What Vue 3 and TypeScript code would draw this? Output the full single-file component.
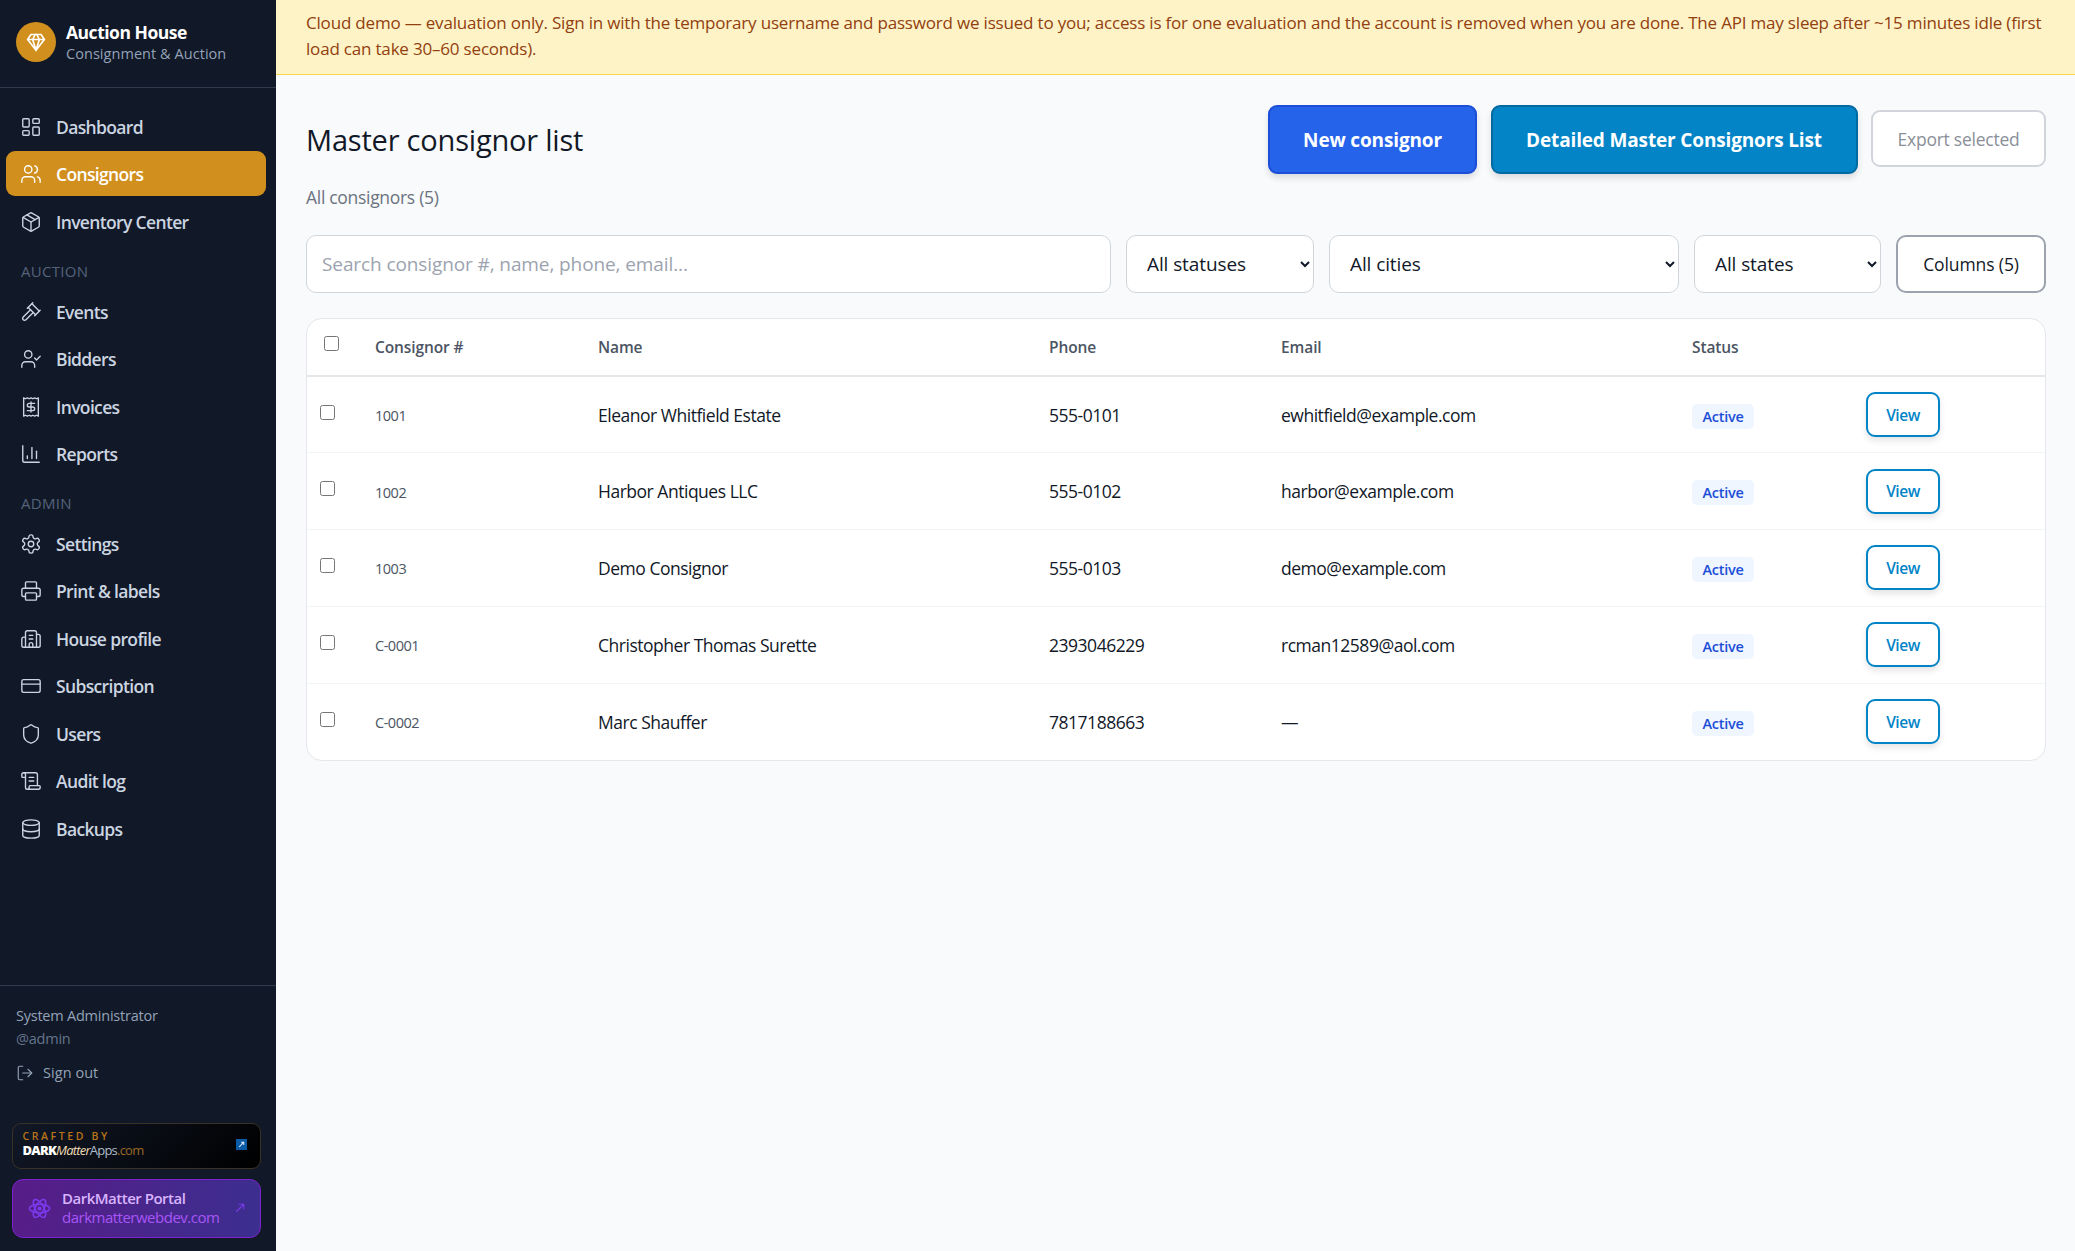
<template>
  <div class="app">
    <aside class="sidebar">
      <div class="brand">
        <div class="brand__logo">
          <svg viewBox="0 0 24 24" class="brand__gem" fill="none" stroke="currentColor" stroke-width="2" stroke-linecap="round" stroke-linejoin="round">
            <path d="M6 3h12l4 6-10 13L2 9Z" />
            <path d="M11 3 8 9l4 13 4-13-3-6" />
            <path d="M2 9h20" />
          </svg>
        </div>
        <div>
          <div class="brand__title">Auction House</div>
          <div class="brand__sub">Consignment &amp; Auction</div>
        </div>
      </div>

      <nav class="nav">
        <template v-for="group in navGroups" :key="group.label">
          <div v-if="group.label" class="nav__label">{{ group.label }}</div>
          <a
            v-for="item in group.items"
            :key="item.name"
            class="nav__item"
            :class="{ 'nav__item--active': item.name === 'Consignors' }"
          >
            <svg viewBox="0 0 24 24" class="nav__icon" fill="none" stroke="currentColor" stroke-width="1.5" stroke-linecap="round" stroke-linejoin="round">
              <path v-for="d in icons[item.icon]" :key="d" :d="d" />
            </svg>
            {{ item.name }}
          </a>
        </template>
      </nav>

      <div class="account">
        <div class="account__name">System Administrator</div>
        <div class="account__handle">@admin</div>
        <a class="account__signout">
          <svg viewBox="0 0 24 24" fill="none" stroke="currentColor" stroke-width="1.5" stroke-linecap="round" stroke-linejoin="round">
            <path d="M9 21H5a2 2 0 0 1-2-2V5a2 2 0 0 1 2-2h4" />
            <path d="m16 17 5-5-5-5" />
            <path d="M21 12H9" />
          </svg>
          Sign out
        </a>
      </div>

      <div class="crafted">
        <div>
          <div class="crafted__by">CRAFTED BY</div>
          <div class="crafted__logo"><b>DARK</b><i>Matter</i><span>Apps</span><em>.com</em></div>
        </div>
        <span class="crafted__link">
          <svg viewBox="0 0 12 12" fill="none" stroke="#dbeafe" stroke-width="1.1"><path d="M3.5 8.5l5-5M5.5 3.5h3v3" /></svg>
        </span>
      </div>

      <div class="portal">
        <svg viewBox="0 0 24 24" class="portal__atom" fill="none" stroke="currentColor" stroke-width="1.6">
          <ellipse cx="12" cy="12" rx="10.5" ry="4.4" />
          <ellipse cx="12" cy="12" rx="10.5" ry="4.4" transform="rotate(60 12 12)" />
          <ellipse cx="12" cy="12" rx="10.5" ry="4.4" transform="rotate(120 12 12)" />
          <circle cx="12" cy="12" r="2.2" fill="currentColor" stroke="none" />
        </svg>
        <div class="portal__text">
          <div class="portal__name">DarkMatter Portal</div>
          <div class="portal__url">darkmatterwebdev.com</div>
        </div>
        <svg viewBox="0 0 12 12" class="portal__arrow" fill="none" stroke="currentColor" stroke-width="1.3"><path d="M1.5 10.5l9-9M4.5 1.5h6v6" /></svg>
      </div>
    </aside>

    <div class="content">
      <div class="banner">
        Cloud demo — evaluation only. Sign in with the temporary username and password we issued to you; access is for one evaluation and the account is removed when you are done. The API may sleep after ~15 minutes idle (first load can take 30–60 seconds).
      </div>

      <main class="page">
        <div class="page__head">
          <h1 class="page__title">Master consignor list</h1>
          <div class="page__actions">
            <button class="btn btn--blue">New consignor</button>
            <button class="btn btn--sky">Detailed Master Consignors List</button>
            <button class="btn btn--export">Export selected</button>
          </div>
        </div>

        <div class="page__count">All consignors (5)</div>

        <div class="filters">
          <input class="filters__search" type="text" placeholder="Search consignor #, name, phone, email..." />
          <select class="filters__select filters__select--status"><option>All statuses</option></select>
          <select class="filters__select filters__select--city"><option>All cities</option></select>
          <select class="filters__select filters__select--state"><option>All states</option></select>
          <button class="filters__columns">Columns (5)</button>
        </div>

        <div class="card">
          <table class="table">
            <colgroup>
              <col style="width: 52px" />
              <col style="width: 223px" />
              <col style="width: 451px" />
              <col style="width: 232px" />
              <col style="width: 411px" />
              <col style="width: 174px" />
              <col />
            </colgroup>
            <thead>
              <tr>
                <th class="table__check"><input type="checkbox" /></th>
                <th>Consignor #</th>
                <th>Name</th>
                <th>Phone</th>
                <th>Email</th>
                <th>Status</th>
                <th></th>
              </tr>
            </thead>
            <tbody>
              <tr v-for="row in consignors" :key="row.id">
                <td class="table__check"><input type="checkbox" /></td>
                <td class="table__id">{{ row.id }}</td>
                <td>{{ row.name }}</td>
                <td>{{ row.phone }}</td>
                <td>{{ row.email }}</td>
                <td class="table__status"><span class="badge">Active</span></td>
                <td><button class="view">View</button></td>
              </tr>
            </tbody>
          </table>
        </div>
      </main>
    </div>
  </div>
</template>

<script setup lang="ts">
interface NavItem {
  name: string
  icon: string
}

interface NavGroup {
  label: string
  items: NavItem[]
}

const navGroups: NavGroup[] = [
  {
    label: '',
    items: [
      { name: 'Dashboard', icon: 'dashboard' },
      { name: 'Consignors', icon: 'users' },
      { name: 'Inventory Center', icon: 'package' },
    ],
  },
  {
    label: 'AUCTION',
    items: [
      { name: 'Events', icon: 'gavel' },
      { name: 'Bidders', icon: 'userCheck' },
      { name: 'Invoices', icon: 'receipt' },
      { name: 'Reports', icon: 'chart' },
    ],
  },
  {
    label: 'ADMIN',
    items: [
      { name: 'Settings', icon: 'settings' },
      { name: 'Print & labels', icon: 'printer' },
      { name: 'House profile', icon: 'building' },
      { name: 'Subscription', icon: 'card' },
      { name: 'Users', icon: 'shield' },
      { name: 'Audit log', icon: 'scroll' },
      { name: 'Backups', icon: 'database' },
    ],
  },
]

const icons: Record<string, string[]> = {
  dashboard: [
    'M4 3h5a1 1 0 0 1 1 1v7a1 1 0 0 1-1 1H4a1 1 0 0 1-1-1V4a1 1 0 0 1 1-1z',
    'M15 3h5a1 1 0 0 1 1 1v3a1 1 0 0 1-1 1h-5a1 1 0 0 1-1-1V4a1 1 0 0 1 1-1z',
    'M15 12h5a1 1 0 0 1 1 1v7a1 1 0 0 1-1 1h-5a1 1 0 0 1-1-1v-7a1 1 0 0 1 1-1z',
    'M4 16h5a1 1 0 0 1 1 1v3a1 1 0 0 1-1 1H4a1 1 0 0 1-1-1v-3a1 1 0 0 1 1-1z',
  ],
  users: [
    'M16 21v-2a4 4 0 0 0-4-4H6a4 4 0 0 0-4 4v2',
    'M13 7a4 4 0 1 1-8 0 4 4 0 0 1 8 0z',
    'M22 21v-2a4 4 0 0 0-3-3.87',
    'M16 3.13a4 4 0 0 1 0 7.75',
  ],
  package: [
    'M11 21.73a2 2 0 0 0 2 0l7-4A2 2 0 0 0 21 16V8a2 2 0 0 0-1-1.73l-7-4a2 2 0 0 0-2 0l-7 4A2 2 0 0 0 3 8v8a2 2 0 0 0 1 1.73z',
    'M12 22V12',
    'M3.29 7 12 12l8.71-5',
    'M7.5 4.27l9 5.15',
  ],
  gavel: [
    'm14.5 12.5-8 8a2.119 2.119 0 1 1-3-3l8-8',
    'm16 16 6-6',
    'm8 8 6-6',
    'm9 7 8 8',
    'm21 11-8-8',
  ],
  userCheck: [
    'M16 21v-2a4 4 0 0 0-4-4H6a4 4 0 0 0-4 4v2',
    'M13 7a4 4 0 1 1-8 0 4 4 0 0 1 8 0z',
    'm16 11 2 2 4-4',
  ],
  receipt: [
    'M4 2v20l2-1 2 1 2-1 2 1 2-1 2 1 2-1 2 1V2l-2 1-2-1-2 1-2-1-2 1-2-1-2 1Z',
    'M16 8h-6a2 2 0 1 0 0 4h4a2 2 0 1 1 0 4H8',
    'M12 17.5v-11',
  ],
  chart: ['M3 3v16a2 2 0 0 0 2 2h16', 'M18 17V9', 'M13 17V5', 'M8 17v-3'],
  settings: [
    'M12.22 2h-.44a2 2 0 0 0-2 2v.18a2 2 0 0 1-1 1.73l-.43.25a2 2 0 0 1-2 0l-.15-.08a2 2 0 0 0-2.73.73l-.22.38a2 2 0 0 0 .73 2.73l.15.1a2 2 0 0 1 1 1.72v.51a2 2 0 0 1-1 1.74l-.15.09a2 2 0 0 0-.73 2.73l.22.38a2 2 0 0 0 2.73.73l.15-.08a2 2 0 0 1 2 0l.43.25a2 2 0 0 1 1 1.73V20a2 2 0 0 0 2 2h.44a2 2 0 0 0 2-2v-.18a2 2 0 0 1 1-1.73l.43-.25a2 2 0 0 1 2 0l.15.08a2 2 0 0 0 2.73-.73l.22-.39a2 2 0 0 0-.73-2.73l-.15-.08a2 2 0 0 1-1-1.74v-.5a2 2 0 0 1 1-1.74l.15-.09a2 2 0 0 0 .73-2.73l-.22-.38a2 2 0 0 0-2.73-.73l-.15.08a2 2 0 0 1-2 0l-.43-.25a2 2 0 0 1-1-1.73V4a2 2 0 0 0-2-2z',
    'M15 12a3 3 0 1 1-6 0 3 3 0 0 1 6 0z',
  ],
  printer: [
    'M6 18H4a2 2 0 0 1-2-2v-5a2 2 0 0 1 2-2h16a2 2 0 0 1 2 2v5a2 2 0 0 1-2 2h-2',
    'M6 9V3a1 1 0 0 1 1-1h10a1 1 0 0 1 1 1v6',
    'M7 14h10a1 1 0 0 1 1 1v6a1 1 0 0 1-1 1H7a1 1 0 0 1-1-1v-6a1 1 0 0 1 1-1z',
  ],
  building: [
    'M10 12h4',
    'M10 8h4',
    'M14 21v-3a2 2 0 0 0-4 0v3',
    'M6 10H4a2 2 0 0 0-2 2v7a2 2 0 0 0 2 2h16a2 2 0 0 0 2-2V9a2 2 0 0 0-2-2h-2',
    'M6 21V5a2 2 0 0 1 2-2h8a2 2 0 0 1 2 2v16',
  ],
  card: [
    'M4 5h16a2 2 0 0 1 2 2v10a2 2 0 0 1-2 2H4a2 2 0 0 1-2-2V7a2 2 0 0 1 2-2z',
    'M2 10h20',
  ],
  shield: [
    'M20 13c0 5-3.5 7.5-7.66 8.95a1 1 0 0 1-.67-.01C7.5 20.5 4 18 4 13V6a1 1 0 0 1 1-1c2 0 4.5-1.2 6.24-2.72a1.17 1.17 0 0 1 1.52 0C14.51 3.81 17 5 19 5a1 1 0 0 1 1 1z',
  ],
  scroll: [
    'M15 12h-5',
    'M15 8h-5',
    'M19 17V5a2 2 0 0 0-2-2H4',
    'M8 21h12a2 2 0 0 0 2-2v-1a1 1 0 0 0-1-1H11a1 1 0 0 0-1 1v1a2 2 0 1 1-4 0V5a2 2 0 1 0-4 0v2a1 1 0 0 0 1 1h3',
  ],
  database: [
    'M3 5a9 3 0 1 0 18 0 9 3 0 1 0-18 0',
    'M3 5v14a9 3 0 0 0 18 0V5',
    'M3 12a9 3 0 0 0 18 0',
  ],
}

const consignors = [
  { id: '1001', name: 'Eleanor Whitfield Estate', phone: '555-0101', email: 'ewhitfield@example.com' },
  { id: '1002', name: 'Harbor Antiques LLC', phone: '555-0102', email: 'harbor@example.com' },
  { id: '1003', name: 'Demo Consignor', phone: '555-0103', email: 'demo@example.com' },
  { id: 'C-0001', name: 'Christopher Thomas Surette', phone: '2393046229', email: 'rcman12589@aol.com' },
  { id: 'C-0002', name: 'Marc Shauffer', phone: '7817188663', email: '—' },
]
</script>

<style>
body {
  background: #f9fafb;
}
</style>

<style scoped>
.app {
  display: flex;
  min-height: 1251px;
  font-family: "Open Sans", "Noto Sans", sans-serif;
  letter-spacing: -0.03em;
  color: #111827;
}

.sidebar {
  width: 276px;
  flex-shrink: 0;
  display: flex;
  flex-direction: column;
  background: #111827;
  color: #cbd5e1;
}

.brand {
  height: 88px;
  box-sizing: border-box;
  display: flex;
  align-items: center;
  gap: 10px;
  padding: 0 16px 3px;
  border-bottom: 1px solid #2f3b4c;
}

.brand__logo {
  width: 40px;
  height: 40px;
  border-radius: 50%;
  background: #d18f1e;
  color: #fff;
  display: flex;
  align-items: center;
  justify-content: center;
}

.brand__gem {
  width: 20px;
  height: 20px;
}

.brand__title {
  font-size: 17.5px;
  font-weight: 700;
  line-height: 22px;
  color: #fff;
}

.brand__sub {
  font-size: 14.5px;
  line-height: 21px;
  letter-spacing: 0.05px;
  color: #94a3b8;
}

.nav {
  flex: 1;
  padding: 16.5px 10px 0 6px;
}

.nav__label {
  margin: 17.5px 0 9px 15px;
  height: 18px;
  line-height: 18px;
  font-size: 15px;
  letter-spacing: 0.3px;
  color: #55637a;
}

.nav__item {
  height: 45px;
  margin-bottom: 2.5px;
  display: flex;
  align-items: center;
  gap: 14px;
  padding-left: 14px;
  border-radius: 9px;
  font-size: 17.5px;
  font-weight: 600;
  letter-spacing: -0.65px;
  color: #cbd5e1;
}

.nav__item--active {
  margin-top: -1px;
  margin-bottom: 3.5px;
  background: #d18f1e;
  color: #fff;
}

.nav__icon {
  width: 22px;
  height: 22px;
  flex-shrink: 0;
}

.account {
  border-top: 1px solid #2f3b4c;
  height: 123px;
  box-sizing: border-box;
  padding: 20px 16px 0;
  font-size: 14.5px;
  letter-spacing: -0.23px;
}

.account__name {
  line-height: 20px;
  color: #94a3b8;
}

.account__handle {
  line-height: 26px;
  color: #64748b;
}

.account__signout {
  display: flex;
  align-items: center;
  gap: 9px;
  margin-top: 11px;
  letter-spacing: 0.05px;
  color: #94a3b8;
}

.account__signout svg {
  width: 18px;
  height: 18px;
}

.crafted {
  margin: 15px 15.5px 0 11.5px;
  height: 46px;
  box-sizing: border-box;
  display: flex;
  align-items: center;
  justify-content: space-between;
  padding: 0 13px 4px 10px;
  border: 1px solid #3a3023;
  border-radius: 9px;
  background: linear-gradient(135deg, #111827, #000);
}

.crafted__by {
  font-size: 10.5px;
  font-weight: 600;
  line-height: 13px;
  letter-spacing: 2.6px;
  color: #b8741a;
}

.crafted__logo {
  font-size: 13px;
  line-height: 15px;
  letter-spacing: -0.06em;
  color: #b0bccb;
}

.crafted__logo b {
  font-weight: 800;
  color: #fff;
}

.crafted__logo i {
  color: #f1dfb6;
}

.crafted__logo em {
  font-style: normal;
  color: #9a6a24;
}

.crafted__link {
  width: 11px;
  height: 11px;
  background: #0b5aa5;
  display: flex;
}

.portal {
  margin: 10px 15.5px 13.5px 11.5px;
  height: 58.5px;
  box-sizing: border-box;
  display: flex;
  align-items: center;
  padding: 0 15px 0 15px;
  border: 1px solid #7e22ce;
  border-radius: 11px;
  background: linear-gradient(100deg, #581c87, #3b2f8f);
}

.portal__atom {
  width: 23px;
  height: 23px;
  color: #7c3aed;
  flex-shrink: 0;
}

.portal__text {
  flex: 1;
  margin-left: 11.5px;
  padding-bottom: 1px;
  letter-spacing: -0.5px;
}

.portal__name {
  font-size: 15px;
  font-weight: 600;
  line-height: 19px;
  color: #d8b4fe;
}

.portal__url {
  font-size: 15px;
  line-height: 18px;
  color: #a855f7;
}

.portal__arrow {
  width: 10px;
  height: 10px;
  color: #7c3aed;
}

.content {
  flex: 1;
  min-width: 0;
  display: flex;
  flex-direction: column;
}

.banner {
  height: 75px;
  box-sizing: border-box;
  padding: 10px 30px 0;
  background: #fef3c7;
  border-bottom: 1px solid #fcd34d;
  font-size: 17px;
  line-height: 26px;
  letter-spacing: -0.19px;
  color: #92400e;
}

.page {
  padding: 30px 29px 0 30px;
}

.page__head {
  height: 69px;
  display: flex;
  align-items: center;
  justify-content: space-between;
}

.page__title {
  margin: 0;
  font-size: 29px;
  font-weight: 400;
  letter-spacing: -0.2px;
}

.page__actions {
  display: flex;
  align-items: center;
  gap: 13.5px;
}

.btn {
  font-family: inherit;
  letter-spacing: -0.15px;
  border-radius: 9px;
  font-size: 19px;
  font-weight: 700;
  box-shadow: 0 4px 6px rgba(0, 0, 0, 0.12);
}

.btn--blue {
  width: 209px;
  height: 69px;
  background: #2563eb;
  border: 2px solid #1d4ed8;
  color: #fff;
}

.btn--sky {
  width: 367px;
  height: 69px;
  background: #0284c7;
  border: 2px solid #0369a1;
  color: #fff;
}

.btn--export {
  width: 175px;
  height: 57px;
  margin-bottom: 2px;
  background: #fff;
  border: 2px solid #d1d5db;
  font-size: 17.5px;
  font-weight: 500;
  letter-spacing: -0.25px;
  color: #8a8f98;
  box-shadow: none;
}

.page__count {
  margin-top: 11px;
  height: 24px;
  line-height: 24px;
  font-size: 17.5px;
  letter-spacing: -0.3px;
  color: #6b7280;
}

.filters {
  margin-top: 26px;
  display: flex;
  gap: 15px;
}

.filters__search,
.filters__select,
.filters__columns {
  height: 58px;
  box-sizing: border-box;
  background: #fff;
  border: 1px solid #d1d5db;
  border-radius: 10px;
  font-family: inherit;
  letter-spacing: -0.1px;
  font-size: 19px;
  color: #111827;
}

.filters__search {
  width: 805px;
  padding: 0 15px;
}

.filters__search::placeholder {
  color: #9ca3af;
}

.filters__select {
  padding: 0 0 0 16px;
}

.filters__select--status {
  width: 188px;
}

.filters__select--city {
  width: 350px;
}

.filters__select--state {
  width: 187px;
}

.filters__columns {
  width: 150px;
  border: 2px solid #9ca3af;
  font-size: 17.5px;
  font-weight: 500;
}

.card {
  margin-top: 25px;
  background: #fff;
  border: 1px solid #e5e7eb;
  border-radius: 16px;
  overflow: hidden;
}

.table {
  width: 100%;
  table-layout: fixed;
  border-collapse: collapse;
}

.table th {
  box-sizing: border-box;
  height: 57px;
  padding: 0 16px;
  text-align: left;
  font-size: 15.5px;
  font-weight: 600;
  letter-spacing: -0.1px;
  color: #4b5563;
  border-bottom: 2px solid #e5e7eb;
}

.table td {
  box-sizing: border-box;
  height: 76.75px;
  padding: 0 16px;
  font-size: 17.5px;
  color: #111827;
  border-bottom: 1px solid #f3f4f6;
}

.table tbody tr:last-child td {
  border-bottom: none;
}

.table input {
  width: 15px;
  height: 15px;
  margin: 0;
}

.table th.table__check {
  padding: 0 0 4px 17px;
}

.table td.table__check {
  padding: 0 0 4px 13px;
}

.table td.table__id {
  padding-top: 2px;
  font-size: 14.5px;
  color: #4b5563;
}

.table td.table__status {
  padding-top: 2px;
}

.badge {
  display: inline-block;
  padding: 0 10.5px;
  height: 25px;
  line-height: 25px;
  border-radius: 5px;
  background: #eff6ff;
  font-size: 14.5px;
  font-weight: 600;
  letter-spacing: -0.25px;
  color: #1d4ed8;
}

.view {
  width: 74px;
  height: 45px;
  background: #fff;
  border: 2px solid #0284c7;
  border-radius: 9px;
  font-family: inherit;
  letter-spacing: inherit;
  font-size: 15.5px;
  font-weight: 600;
  color: #0284c7;
  box-shadow: 0 4px 6px rgba(0, 0, 0, 0.1);
}
</style>
